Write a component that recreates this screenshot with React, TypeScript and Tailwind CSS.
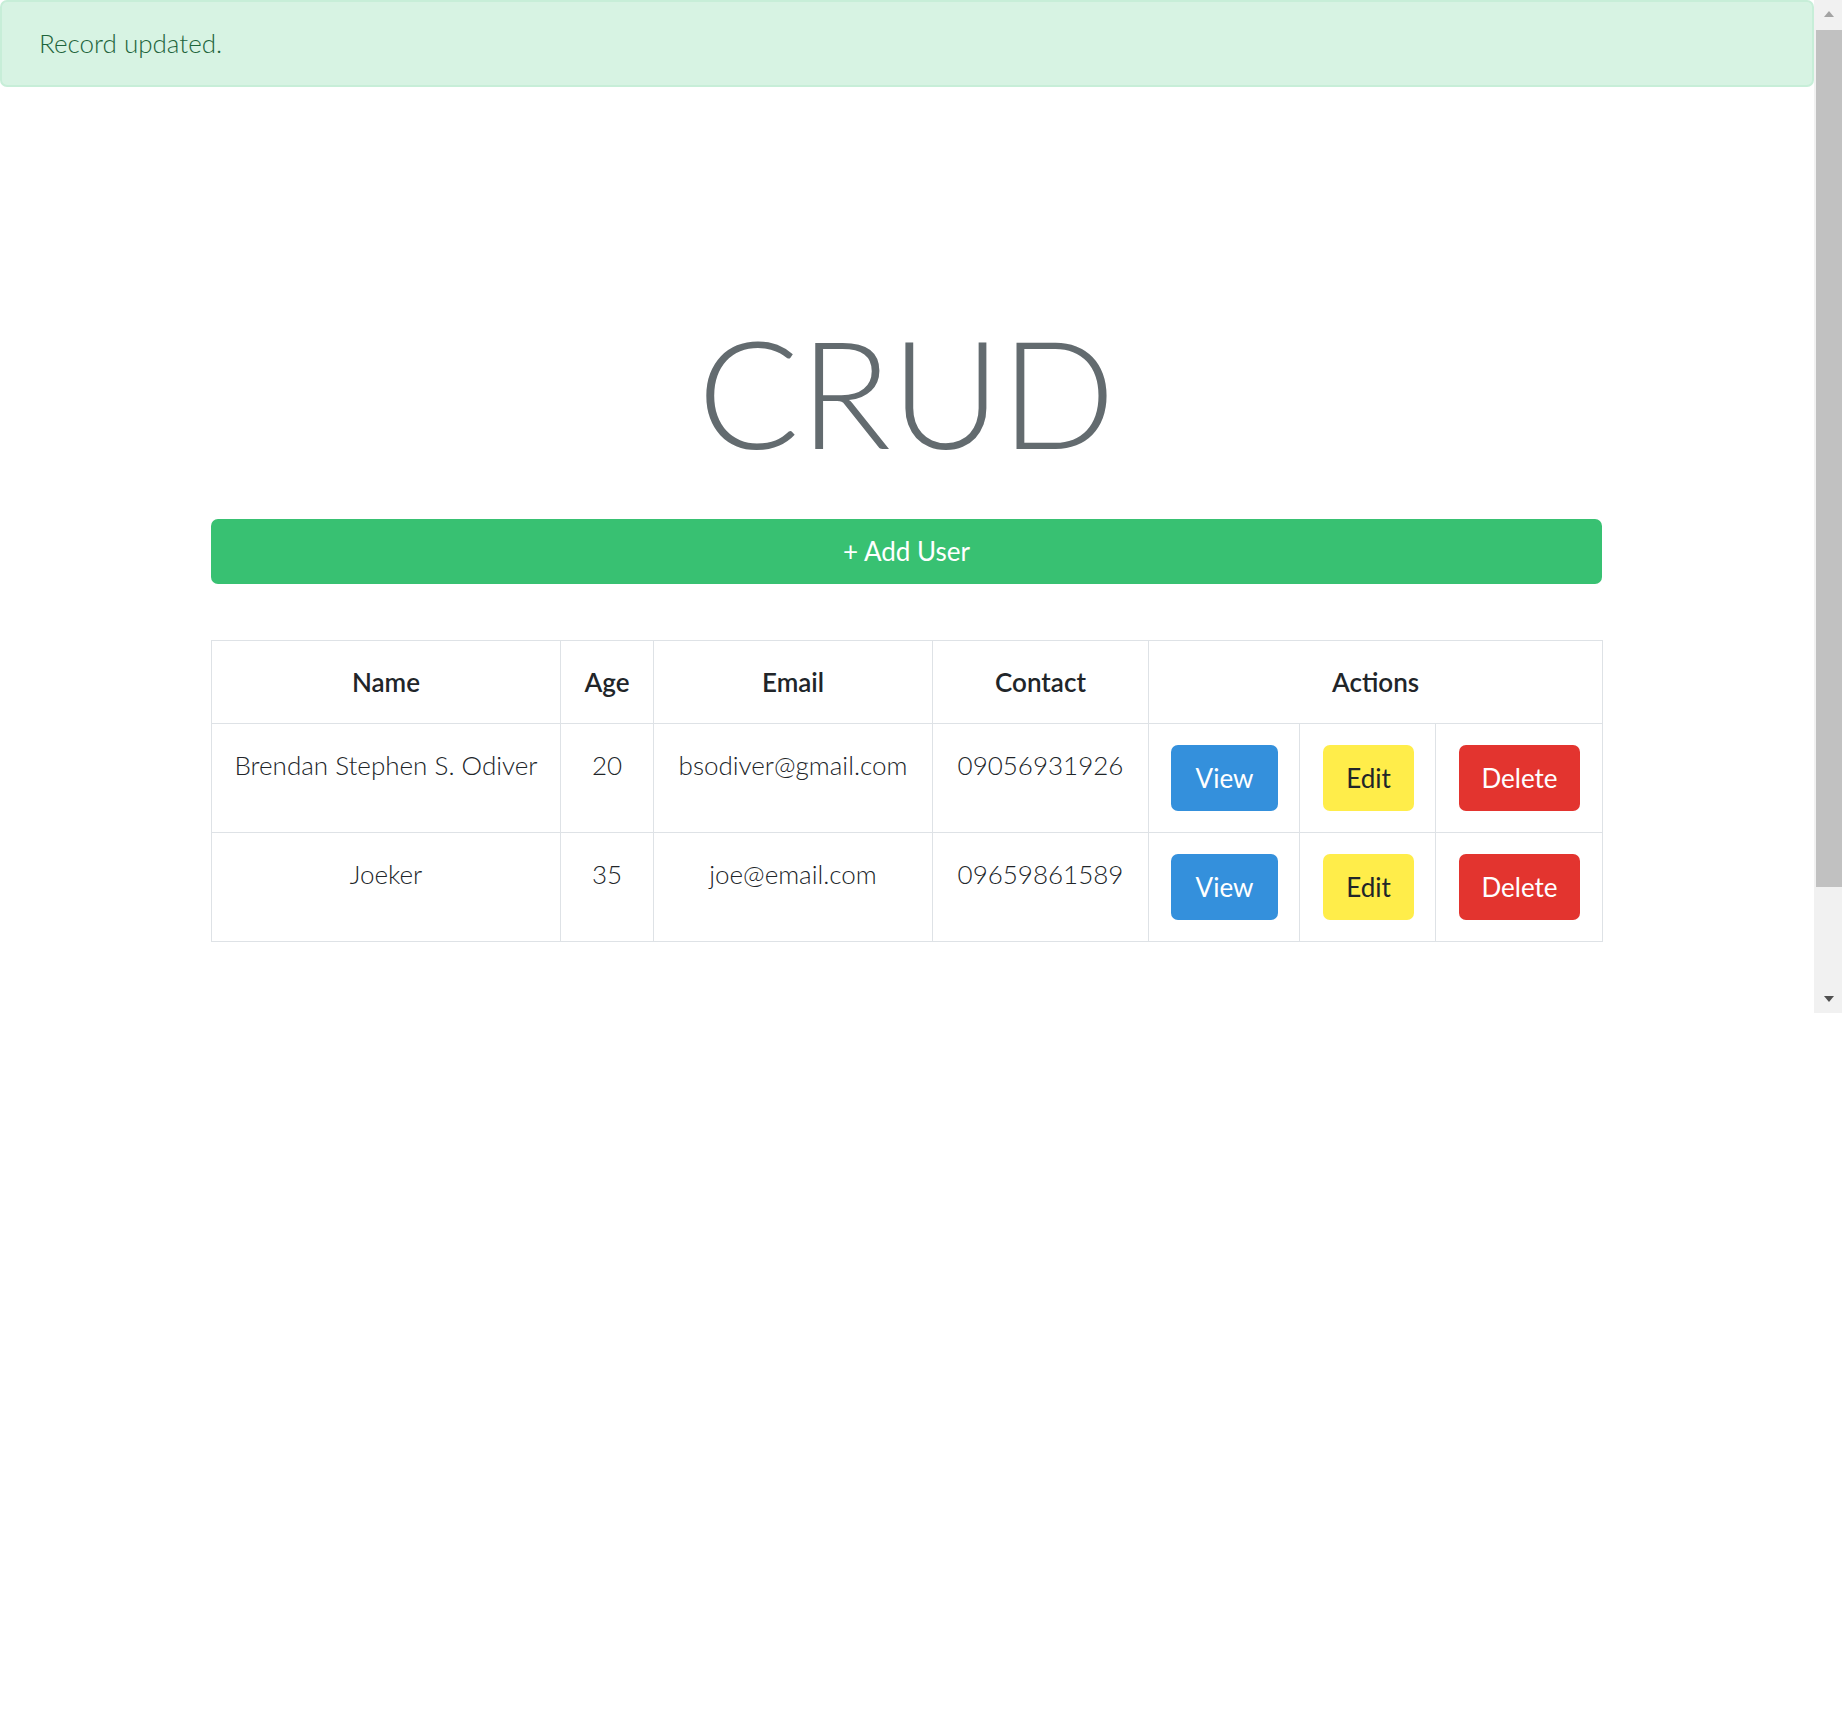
import React from 'react';

type User = {
  name: string;
  age: number;
  email: string;
  contact: string;
};

const users: User[] = [
  { name: 'Brendan Stephen S. Odiver', age: 20, email: 'bsodiver@gmail.com', contact: '09056931926' },
  { name: 'Joeker', age: 35, email: 'joe@email.com', contact: '09659861589' },
];

function Scrollbar() {
  return (
    <div className="w-[28px] h-[1013px] shrink-0 bg-[#f1f1f1] flex flex-col pl-[2px]">
      <div className="h-[28px] flex items-center justify-center">
        <svg width="10" height="6" viewBox="0 0 10 6">
          <path d="M0 6 L5 0 L10 6 Z" fill="#a3a3a3" />
        </svg>
      </div>
      <div className="mt-[2px] h-[857px] bg-[#c1c1c1]" />
      <div className="grow" />
      <div className="h-[28px] flex items-center justify-center">
        <svg width="10" height="6" viewBox="0 0 10 6">
          <path d="M0 0 L10 0 L5 6 Z" fill="#505050" />
        </svg>
      </div>
    </div>
  );
}

function ActionButton({ label, className }: { label: string; className: string }) {
  return (
    <button
      className={`h-[66px] rounded-[7px] text-[26px] font-normal leading-none ${className}`}
    >
      {label}
    </button>
  );
}

export default function App() {
  return (
    <div className="flex w-full min-h-[1729px] bg-white font-[family-name:Lato,sans-serif]">
      <div className="flex-1 min-w-0">
        <div className="h-[87px] border-2 border-[#c7eed8] bg-[#d7f3e3] rounded-[7px] pl-[37px] flex items-center">
          <p className="text-[26px] font-light text-[#1d643b]">Record updated.</p>
        </div>

        <div className="w-[1391px] ml-[211px]">
          <h1 className="mt-[228px] text-center text-[151px] leading-none font-light text-[#636b6f]">
            CRUD
          </h1>

          <button className="mt-[53px] w-full h-[65px] rounded-[7px] bg-[#38c172] text-white text-[26px] font-normal">
            + Add User
          </button>

          <table className="mt-[56px] w-full table-fixed border-collapse text-[26px] text-[#212529]">
            <colgroup>
              <col className="w-[349px]" />
              <col className="w-[93px]" />
              <col className="w-[279px]" />
              <col className="w-[216px]" />
              <col className="w-[151px]" />
              <col className="w-[136px]" />
              <col className="w-[167px]" />
            </colgroup>
            <thead>
              <tr className="h-[83px]">
                <th className="border border-[#dee2e6] align-middle font-semibold">Name</th>
                <th className="border border-[#dee2e6] align-middle font-semibold">Age</th>
                <th className="border border-[#dee2e6] align-middle font-semibold">Email</th>
                <th className="border border-[#dee2e6] align-middle font-semibold">Contact</th>
                <th colSpan={3} className="border border-[#dee2e6] align-middle font-semibold">
                  Actions
                </th>
              </tr>
            </thead>
            <tbody>
              {users.map((u) => (
                <tr key={u.email} className="h-[109px]">
                  <td className="border border-[#dee2e6] align-top text-center font-light pt-[21px] leading-[41px]">{u.name}</td>
                  <td className="border border-[#dee2e6] align-top text-center font-light pt-[21px] leading-[41px]">{u.age}</td>
                  <td className="border border-[#dee2e6] align-top text-center font-light pt-[21px] leading-[41px]">{u.email}</td>
                  <td className="border border-[#dee2e6] align-top text-center font-light pt-[21px] leading-[41px]">{u.contact}</td>
                  <td className="border border-[#dee2e6] align-top px-[22px] pt-[21px]">
                    <ActionButton label="View" className="w-[107px] bg-[#3490dc] text-white" />
                  </td>
                  <td className="border border-[#dee2e6] align-top pl-[23px] pt-[21px]">
                    <ActionButton label="Edit" className="w-[91px] bg-[#ffed4a] text-[#212529]" />
                  </td>
                  <td className="border border-[#dee2e6] align-top pl-[23px] pt-[21px]">
                    <ActionButton label="Delete" className="w-[121px] bg-[#e3342f] text-white" />
                  </td>
                </tr>
              ))}
            </tbody>
          </table>
        </div>
      </div>
      <Scrollbar />
    </div>
  );
}
